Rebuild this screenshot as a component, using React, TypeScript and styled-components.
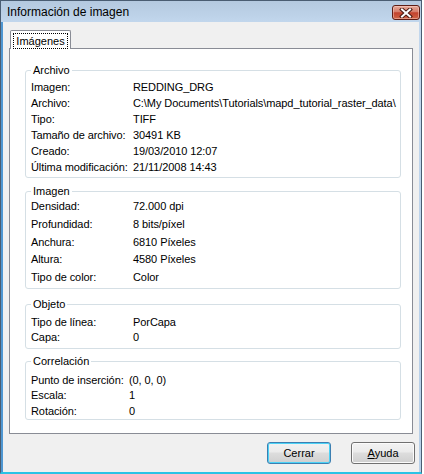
import React from "react";
import styled, { createGlobalStyle } from "styled-components";

const Global = createGlobalStyle`
  html, body { margin: 0; padding: 0; background: #ffffff; }
  body {
    font-family: "Liberation Sans", Arial, sans-serif;
    font-size: 11px;
    color: #000000;
  }
  * { box-sizing: border-box; }
`;

const Window = styled.div`
  width: 422px;
  height: 474px;
  display: flex;
  flex-direction: column;
  overflow: hidden;
  border: 1px solid #4a5d72;
  border-bottom: 2px solid #2cc3e5;
  background: linear-gradient(180deg, #b4c9df 0px, #c2d7ed 22px, #b7cfe8 100%);
`;

const TitleBar = styled.div`
  height: 21px;
  flex: none;
  display: flex;
  align-items: flex-start;
  justify-content: space-between;
  padding: 0 1px 0 6px;
`;

const TitleText = styled.div`
  font-size: 12px;
  line-height: 14px;
  margin-top: 4px;
  color: #000;
`;

const CloseButton = styled.div`
  width: 28px;
  height: 15px;
  margin-top: 4px;
  border: 1px solid #5e1d14;
  border-radius: 3px;
  background: linear-gradient(180deg, #e7ab9b 0%, #d67c69 45%, #c2422d 52%, #cf6446 100%);
  display: flex;
  align-items: center;
  justify-content: center;
  box-shadow: inset 0 0 0 1px rgba(255, 220, 210, 0.45);
`;

const Frame = styled.div`
  flex: 1;
  min-height: 0;
  display: flex;
  padding: 0 2px 0 2px;
  background: linear-gradient(90deg, #4f97d2 0px, #4f97d2 2px, transparent 2px);
`;

const Client = styled.div`
  flex: 1;
  min-width: 0;
  display: flex;
  flex-direction: column;
  background: #f0f0f0;
  padding: 8px 6px 8px 6px;
`;

const TabStrip = styled.div`
  display: flex;
  height: 19px;
  margin-bottom: -1px;
  position: relative;
  z-index: 1;
`;

const Tab = styled.div`
  margin-left: 1px;
  width: 61px;
  height: 19px;
  background: #ffffff;
  border: 1px solid #898c95;
  border-bottom: none;
  border-radius: 2px 2px 0 0;
  padding: 2px 2px 0 2px;
`;

const TabFocus = styled.div`
  height: 16px;
  border: 1px dotted #000;
  display: flex;
  align-items: center;
  justify-content: center;
  line-height: 14px;
`;

const Panel = styled.div`
  height: 386px;
  flex: none;
  min-width: 0;
  background: #ffffff;
  border: 1px solid #898c95;
  padding: 15px 11px 0 15px;
  display: flex;
  flex-direction: column;
`;

const Group = styled.fieldset<{ $mt: number; $pt: number; $pb: number }>`
  margin: ${(p) => p.$mt}px 0 0 0;
  padding: ${(p) => p.$pt}px 5px ${(p) => p.$pb}px 5px;
  border: 1px solid #d5dfe5;
  border-radius: 3px;
  min-width: 0;
`;

const Legend = styled.legend`
  padding: 0 2px;
  line-height: 13px;
  color: #000;
`;

const Row = styled.div<{ $h: number; $lw: number }>`
  display: grid;
  grid-template-columns: ${(p) => p.$lw}px minmax(0, 1fr);
  height: ${(p) => p.$h}px;
  line-height: ${(p) => p.$h}px;
  white-space: nowrap;
  letter-spacing: -0.08px;
`;

const Cell = styled.span`
  min-width: 0;
  overflow: visible;
`;

const ButtonRow = styled.div`
  display: flex;
  justify-content: flex-end;
  gap: 20px;
  margin-top: 8px;
  margin-right: -2px;
`;

const Button = styled.button<{ $default?: boolean }>`
  width: 64px;
  height: 22px;
  padding: 0;
  font: 11px "Liberation Sans", Arial, sans-serif;
  color: #000;
  border: 1px solid ${(p) => (p.$default ? "#3c7fb1" : "#707070")};
  border-radius: 3px;
  background: linear-gradient(180deg, #f2f2f2 0%, #ebebeb 45%, #dddddd 50%, #cfcfcf 100%);
  box-shadow: inset 0 0 0 1px ${(p) => (p.$default ? "#4cd2f6" : "#fbfbfb")};
`;

type Item = [string, string];

interface GroupDef {
  title: string;
  mt: number;
  pt: number;
  pb: number;
  h: number;
  lw: number;
  rows: Item[];
}

const groups: GroupDef[] = [
  {
    title: "Archivo",
    mt: 0,
    pt: 2,
    pb: 2,
    h: 16,
    lw: 102,
    rows: [
      ["Imagen:", "REDDING_DRG"],
      ["Archivo:", "C:\\My Documents\\Tutorials\\mapd_tutorial_raster_data\\"],
      ["Tipo:", "TIFF"],
      ["Tamaño de archivo:", "30491 KB"],
      ["Creado:", "19/03/2010 12:07"],
      ["Última modificación:", "21/11/2008 14:43"],
    ],
  },
  {
    title: "Imagen",
    mt: 7,
    pt: 0,
    pb: 1,
    h: 17.75,
    lw: 102,
    rows: [
      ["Densidad:", "72.000 dpi"],
      ["Profundidad:", "8 bits/píxel"],
      ["Anchura:", "6810 Píxeles"],
      ["Altura:", "4580 Píxeles"],
      ["Tipo de color:", "Color"],
    ],
  },
  {
    title: "Objeto",
    mt: 9,
    pt: 4,
    pb: 3,
    h: 15,
    lw: 102,
    rows: [
      ["Tipo de línea:", "PorCapa"],
      ["Capa:", "0"],
    ],
  },
  {
    title: "Correlación",
    mt: 6,
    pt: 5,
    pb: 0,
    h: 15.5,
    lw: 98,
    rows: [
      ["Punto de inserción:", "(0, 0, 0)"],
      ["Escala:", "1"],
      ["Rotación:", "0"],
    ],
  },
];

const CloseGlyph = () => (
  <svg width="14" height="10" viewBox="0 0 14 10">
    <path d="M3 1.5 L11 8.5 M11 1.5 L3 8.5" stroke="#4a1a12" strokeWidth="4" strokeLinecap="square" />
    <path d="M3 1.5 L11 8.5 M11 1.5 L3 8.5" stroke="#ffffff" strokeWidth="2" strokeLinecap="square" />
  </svg>
);

export default function App() {
  return (
    <>
      <Global />
      <Window>
        <TitleBar>
          <TitleText>Información de imagen</TitleText>
          <CloseButton>
            <CloseGlyph />
          </CloseButton>
        </TitleBar>
        <Frame>
          <Client>
            <TabStrip>
              <Tab>
                <TabFocus>Imágenes</TabFocus>
              </Tab>
            </TabStrip>
            <Panel>
              {groups.map((g) => (
                <Group key={g.title} $mt={g.mt} $pt={g.pt} $pb={g.pb}>
                  <Legend>{g.title}</Legend>
                  {g.rows.map(([label, value]) => (
                    <Row key={label} $h={g.h} $lw={g.lw}>
                      <Cell>{label}</Cell>
                      <Cell>{value}</Cell>
                    </Row>
                  ))}
                </Group>
              ))}
            </Panel>
            <ButtonRow>
              <Button $default>Cerrar</Button>
              <Button>
                <u>A</u>yuda
              </Button>
            </ButtonRow>
          </Client>
        </Frame>
      </Window>
    </>
  );
}
